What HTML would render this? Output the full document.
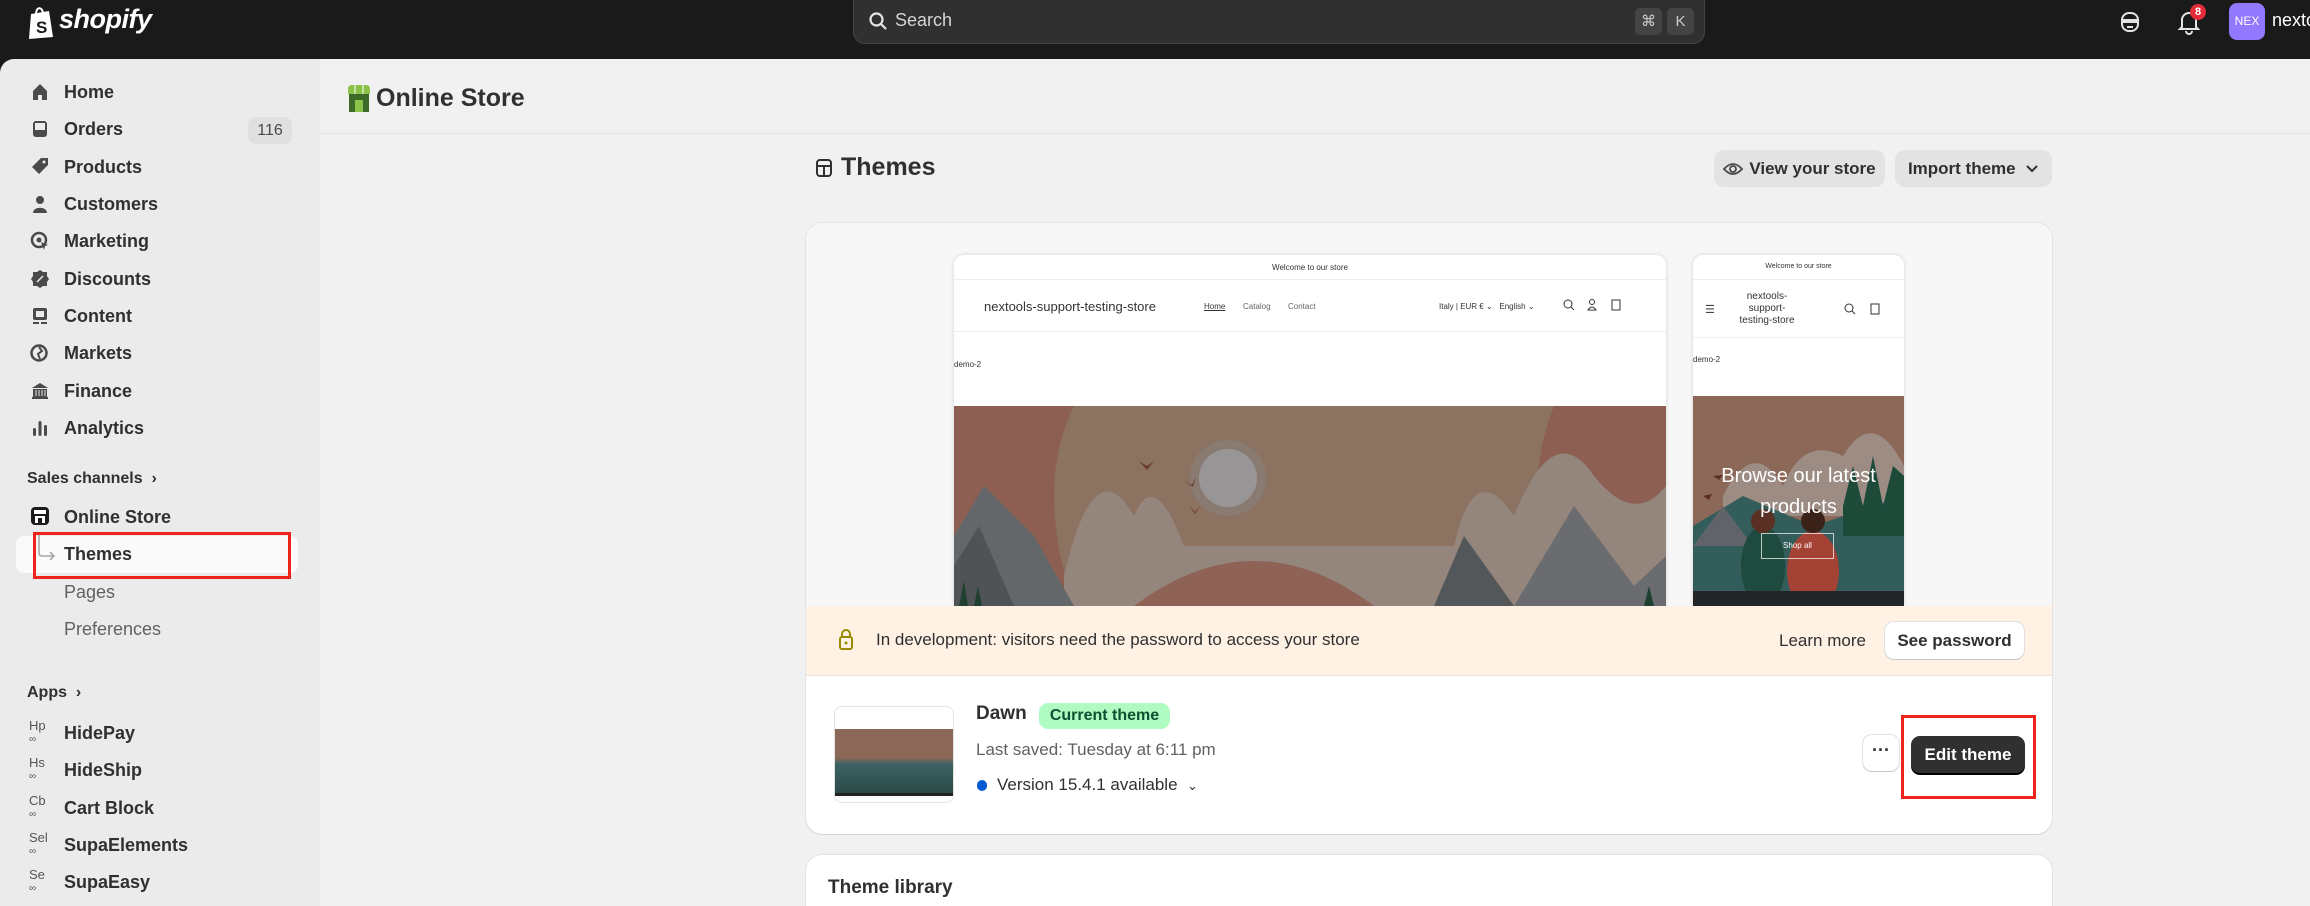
<!DOCTYPE html>
<html style="width:2310px;height:906px;overflow:hidden"><head><meta charset="utf-8"><style>
*{box-sizing:border-box;margin:0;padding:0}
body{width:2310px;height:906px;overflow:hidden;background:#1a1a1a;font-family:"Liberation Sans",sans-serif;color:#303030;position:relative}
.a{position:absolute}
.top{left:0;top:0;width:2310px;height:59px;background:#1a1a1a}
.side{left:0;top:59px;width:320px;height:847px;background:#ebebeb;border-top-left-radius:14px}
.main{left:320px;top:59px;width:1990px;height:847px;background:#f1f1f1}
.nav{position:absolute;left:64px;font-size:18px;color:#303030;font-weight:600;line-height:22px}
.ic{position:absolute;left:30px;width:20px;height:20px}
.sub{color:#616161;font-weight:400}
.btn{position:absolute;background:#e3e3e3;border-radius:10px;font-size:17px;color:#303030;font-weight:600;display:flex;align-items:center;justify-content:center}
</style></head><body>
<div class="a top"></div>
<svg class="a" style="left:27px;top:6px" width="30" height="34" viewBox="0 0 30 34"><path d="M4 8 L22 5 L26 31 L2 33 Z" fill="#fff"/><path d="M9 8 C9 1 15 0 16 7" stroke="#fff" stroke-width="2" fill="none"/><text x="9" y="27" font-size="17" font-weight="700" fill="#1a1a1a" font-family="Liberation Sans">S</text></svg>
<div class="a" style="left:59px;top:4px;font-size:27px;font-weight:700;font-style:italic;color:#fff;letter-spacing:-0.5px">shopify</div>
<div class="a" style="left:853px;top:-10px;width:852px;height:54px;background:#303030;border:1px solid #444;border-radius:12px"></div>
<svg class="a" style="left:868px;top:11px" width="20" height="20" viewBox="0 0 20 20"><circle cx="8.5" cy="8.5" r="6" stroke="#e3e3e3" stroke-width="2.2" fill="none"/><path d="M13 13l5 5" stroke="#e3e3e3" stroke-width="2.2"/></svg>
<div class="a" style="left:895px;top:10px;font-size:18px;color:#d4d4d4">Search</div>
<div class="a" style="left:1635px;top:8px;width:27px;height:27px;background:#444;border-radius:5px;color:#ccc;font-size:15px;text-align:center;line-height:27px">⌘</div>
<div class="a" style="left:1667px;top:8px;width:27px;height:27px;background:#444;border-radius:5px;color:#ccc;font-size:15px;text-align:center;line-height:27px">K</div>
<svg class="a" style="left:2119px;top:10px" width="22" height="24" viewBox="0 0 22 24"><rect x="3" y="3" width="16" height="18" rx="7" fill="none" stroke="#e3e3e3" stroke-width="2"/><rect x="4" y="9" width="14" height="4" fill="#e3e3e3"/><path d="M8 17h6" stroke="#e3e3e3" stroke-width="2"/></svg>
<svg class="a" style="left:2177px;top:9px" width="24" height="26" viewBox="0 0 24 26"><path d="M5 18 V11 a7 7 0 0 1 14 0 V18 L21 20 H3 Z" fill="none" stroke="#e3e3e3" stroke-width="2"/><path d="M9 22 a3 3 0 0 0 6 0" fill="none" stroke="#e3e3e3" stroke-width="2"/></svg>
<div class="a" style="left:2190px;top:4px;width:16px;height:16px;border-radius:8px;background:#e22c38;color:#fff;font-size:11px;text-align:center;line-height:16px;font-weight:700">8</div>
<div class="a" style="left:2229px;top:3px;width:36px;height:37px;border-radius:8px;background:#9277ff;color:#fff;font-size:12px;text-align:center;line-height:37px">NEX</div>
<div class="a" style="left:2272px;top:10px;font-size:18px;color:#fff">nexto</div>

<div class="a side"></div>
<div class="a main"></div>

<svg class="ic" style="top:82px" viewBox="0 0 20 20"><path d="M3 9 L10 2 L17 9 V18 H12 V13 H8 V18 H3Z" fill="#4a4a4a"/></svg>
<div class="nav" style="top:81px">Home</div>
<svg class="ic" style="top:119px" viewBox="0 0 20 20"><rect x="3" y="2" width="14" height="16" rx="3" fill="#4a4a4a"/><rect x="5" y="4" width="10" height="7" fill="#ebebeb"/></svg>
<div class="nav" style="top:118px">Orders</div>
<div class="a" style="left:248px;top:117px;width:44px;height:27px;border-radius:8px;background:#e0e0e0;font-size:16px;color:#4a4a4a;text-align:center;line-height:27px">116</div>
<svg class="ic" style="top:156px" viewBox="0 0 20 20"><path d="M11 2 H18 V9 L9 18 L2 11 Z" fill="#4a4a4a"/><circle cx="14" cy="6" r="1.5" fill="#ebebeb"/></svg>
<div class="nav" style="top:156px">Products</div>
<svg class="ic" style="top:194px" viewBox="0 0 20 20"><circle cx="10" cy="6" r="4" fill="#4a4a4a"/><path d="M3 19 C3 12 17 12 17 19Z" fill="#4a4a4a"/></svg>
<div class="nav" style="top:193px">Customers</div>
<svg class="ic" style="top:231px" viewBox="0 0 20 20"><circle cx="9" cy="9" r="7" stroke="#4a4a4a" stroke-width="2.5" fill="none"/><circle cx="9" cy="9" r="2.5" fill="#4a4a4a"/><path d="M11 11 L18 14 L15 15 L14 19Z" fill="#4a4a4a"/></svg>
<div class="nav" style="top:230px">Marketing</div>
<svg class="ic" style="top:269px" viewBox="0 0 20 20"><path d="M10 1 L13 3 L17 3 L17 7 L19 10 L17 13 L17 17 L13 17 L10 19 L7 17 L3 17 L3 13 L1 10 L3 7 L3 3 L7 3Z" fill="#4a4a4a"/><path d="M7 13 L13 7" stroke="#ebebeb" stroke-width="1.5"/></svg>
<div class="nav" style="top:268px">Discounts</div>
<svg class="ic" style="top:306px" viewBox="0 0 20 20"><rect x="3" y="2" width="14" height="12" rx="2" fill="#4a4a4a"/><rect x="6" y="5" width="8" height="6" fill="#ebebeb"/><path d="M3 17h6M11 17h6" stroke="#4a4a4a" stroke-width="2"/></svg>
<div class="nav" style="top:305px">Content</div>
<svg class="ic" style="top:343px" viewBox="0 0 20 20"><circle cx="9" cy="10" r="7.5" stroke="#4a4a4a" stroke-width="2.5" fill="none"/><path d="M9 4 L12 8 L8 11 L10 16" stroke="#4a4a4a" stroke-width="2" fill="none"/></svg>
<div class="nav" style="top:342px">Markets</div>
<svg class="ic" style="top:381px" viewBox="0 0 20 20"><path d="M2 7 L10 2 L18 7Z" fill="#4a4a4a"/><rect x="3" y="8" width="14" height="8" fill="#4a4a4a"/><path d="M6 9v6M9 9v6M12 9v6M15 9v6" stroke="#ebebeb"/><rect x="2" y="16" width="16" height="2" fill="#4a4a4a"/></svg>
<div class="nav" style="top:380px">Finance</div>
<svg class="ic" style="top:418px" viewBox="0 0 20 20"><rect x="3" y="10" width="3" height="8" rx="1.5" fill="#4a4a4a"/><rect x="8.5" y="3" width="3" height="15" rx="1.5" fill="#4a4a4a"/><rect x="14" y="7" width="3" height="11" rx="1.5" fill="#4a4a4a"/></svg>
<div class="nav" style="top:417px">Analytics</div>

<div class="a" style="left:27px;top:470px;font-size:16px;color:#303030;font-weight:600">Sales channels &nbsp;›</div>
<svg class="ic" style="top:506px" viewBox="0 0 20 20"><rect x="1" y="1" width="18" height="18" rx="4" fill="#1a1a1a"/><rect x="4" y="4" width="12" height="4" fill="#fff"/><rect x="5" y="10" width="10" height="7" fill="#fff"/><rect x="8" y="12" width="4" height="5" fill="#1a1a1a"/></svg>
<div class="nav" style="top:506px">Online Store</div>
<div class="a" style="left:16px;top:536px;width:282px;height:37px;border-radius:8px;background:#fafafa"></div>
<svg class="a" style="left:36px;top:533px" width="22" height="30" viewBox="0 0 22 30"><path d="M3 0 V20 Q3 23 6 23 H18 M14 19 L18 23 L14 27" stroke="#a8a8a8" stroke-width="1.6" fill="none"/></svg>
<div class="nav" style="top:543px">Themes</div>
<div class="a" style="left:33px;top:532px;width:258px;height:47px;border:3px solid #f0231b"></div>
<div class="nav sub" style="top:581px">Pages</div>
<div class="nav sub" style="top:618px">Preferences</div>
<div class="a" style="left:27px;top:684px;font-size:16px;color:#303030;font-weight:600">Apps &nbsp;›</div>
<div class="a" style="left:29px;top:720px;font-size:13px;color:#555;line-height:12px">Hp<br><span style="font-size:10px">∞</span></div><div class="nav" style="top:722px">HidePay</div>
<div class="a" style="left:29px;top:757px;font-size:13px;color:#555;line-height:12px">Hs<br><span style="font-size:10px">∞</span></div><div class="nav" style="top:759px">HideShip</div>
<div class="a" style="left:29px;top:795px;font-size:13px;color:#555;line-height:12px">Cb<br><span style="font-size:10px">∞</span></div><div class="nav" style="top:797px">Cart Block</div>
<div class="a" style="left:29px;top:832px;font-size:13px;color:#555;line-height:12px">Sel<br><span style="font-size:10px">∞</span></div><div class="nav" style="top:834px">SupaElements</div>
<div class="a" style="left:29px;top:869px;font-size:13px;color:#555;line-height:12px">Se<br><span style="font-size:10px">∞</span></div><div class="nav" style="top:871px">SupaEasy</div>

<svg class="a" style="left:347px;top:85px" width="24" height="28" viewBox="0 0 24 28"><path d="M1 4 Q1 0 5 0 H19 Q23 0 23 4 V9 H1Z" fill="#8bc34a"/><path d="M8 0 V9 M16 0 V9" stroke="#c5e1a5" stroke-width="2"/><rect x="2" y="9" width="20" height="18" fill="#3f6b2a"/><rect x="8" y="15" width="8" height="12" fill="#8bc34a"/></svg>
<div class="a" style="left:376px;top:84px;font-size:25px;font-weight:700;color:#303030">Online Store</div>
<div class="a" style="left:320px;top:133px;width:1990px;height:1px;background:#e3e3e3"></div>

<svg class="a" style="left:815px;top:158px" width="18" height="20" viewBox="0 0 18 20"><rect x="2" y="2" width="14" height="16" rx="3" fill="none" stroke="#303030" stroke-width="2"/><path d="M2 8H16M9 8V18" stroke="#303030" stroke-width="2"/></svg>
<div class="a" style="left:841px;top:153px;font-size:25px;font-weight:700;color:#303030">Themes</div>
<div class="btn" style="left:1714px;top:150px;width:171px;height:37px"><svg width="20" height="20" viewBox="0 0 20 20" style="margin-right:6px"><path d="M1 10 Q10 0 19 10 Q10 20 1 10Z" fill="none" stroke="#4a4a4a" stroke-width="1.8"/><circle cx="10" cy="10" r="3" fill="none" stroke="#4a4a4a" stroke-width="1.8"/></svg>View your store</div>
<div class="btn" style="left:1895px;top:150px;width:157px;height:37px">Import theme&nbsp;&nbsp;<svg width="14" height="10" viewBox="0 0 14 10"><path d="M2 2l5 5 5-5" stroke="#303030" stroke-width="2" fill="none"/></svg></div>

<div class="a" style="left:806px;top:223px;width:1246px;height:611px;background:#fff;border-radius:16px;box-shadow:0 1px 0 #d4d4d4,0 0 0 1px #e3e3e3;overflow:hidden">
  <div class="a" style="left:0;top:0;width:1246px;height:383px;background:#f7f7f7"></div>
  <div class="a" style="left:148px;top:32px;width:712px;height:351px;background:#fff;border-radius:10px 10px 0 0;box-shadow:0 0 4px rgba(0,0,0,.15);overflow:hidden">
    <div class="a" style="left:0;top:8px;width:712px;text-align:center;font-size:8px;color:#333">Welcome to our store</div>
    <div class="a" style="left:0;top:24px;width:712px;height:1px;background:#eee"></div>
    <div class="a" style="left:30px;top:44px;font-size:13px;color:#333">nextools-support-testing-store</div>
    <div class="a" style="left:250px;top:47px;font-size:8px;color:#333;text-decoration:underline">Home</div>
    <div class="a" style="left:289px;top:47px;font-size:8px;color:#666">Catalog</div>
    <div class="a" style="left:334px;top:47px;font-size:8px;color:#666">Contact</div>
    <div class="a" style="left:485px;top:47px;font-size:8px;color:#333">Italy | EUR € ⌄ &nbsp; English ⌄</div>
    <svg class="a" style="left:608px;top:42px" width="60" height="16" viewBox="0 0 60 16"><circle cx="6" cy="7" r="4" stroke="#333" fill="none"/><path d="M9 10l3 3" stroke="#333"/><circle cx="30" cy="5" r="2.5" stroke="#333" fill="none"/><path d="M26 13 Q30 7 34 13Z" stroke="#333" fill="none"/><rect x="50" y="3" width="8" height="10" stroke="#333" fill="none"/></svg>
    <div class="a" style="left:0;top:76px;width:712px;height:1px;background:#eee"></div>
    <div class="a" style="left:0;top:105px;font-size:8px;color:#333">demo-2</div>
    <svg class="a" style="left:0;top:151px" width="712" height="200" viewBox="0 0 712 200">
      <rect width="712" height="200" fill="#8c5f52"/>
      <path d="M120 0 Q80 80 120 200 H620 Q560 100 600 0Z" fill="#8c7261"/>
      <circle cx="274" cy="72" r="38" fill="#8a7b72"/><circle cx="274" cy="72" r="29" fill="#979595"/>
      <path d="M110 170 Q140 40 180 110 Q200 60 230 140 H500 Q520 50 560 110 Q600 10 640 70 Q680 120 712 80 V200 H110Z" fill="#94857d"/>
      <path d="M0 130 L30 80 L80 130 L120 200 H0Z" fill="#64676a"/><path d="M0 160 L25 120 L60 200 H0Z" fill="#4f5356"/>
      <path d="M560 200 L620 100 L680 180 L712 150 V200Z" fill="#6a6c6f"/><path d="M480 200 L510 130 L560 200Z" fill="#53575a"/>
      <path d="M180 200 Q300 110 420 200Z" fill="#8e6355"/>
      <path d="M185 55l8 5 7-5-7 9z M230 75l8 4 4-8-3 10z M235 100l6 6 5-6-5 8z" fill="#6e3a30"/>
      <path d="M5 200 L10 175 L14 200Z M20 200 L24 180 L28 200Z M690 200 L695 180 L700 200Z" fill="#1f4030"/>
    </svg>
  </div>
  <div class="a" style="left:887px;top:32px;width:211px;height:351px;background:#fff;border-radius:10px 10px 0 0;box-shadow:0 0 4px rgba(0,0,0,.15);overflow:hidden">
    <div class="a" style="left:0;top:8px;width:211px;text-align:center;font-size:7px;color:#333">Welcome to our store</div>
    <div class="a" style="left:0;top:24px;width:211px;height:1px;background:#eee"></div>
    <div class="a" style="left:12px;top:48px;font-size:11px;color:#444">☰</div>
    <div class="a" style="left:45px;top:36px;width:58px;text-align:center;font-size:10px;color:#333;line-height:12px">nextools-support-testing-store</div>
    <svg class="a" style="left:150px;top:46px" width="40" height="16" viewBox="0 0 40 16"><circle cx="6" cy="7" r="4" stroke="#333" fill="none"/><path d="M9 10l3 3" stroke="#333"/><rect x="28" y="3" width="8" height="10" stroke="#333" fill="none"/></svg>
    <div class="a" style="left:0;top:82px;width:211px;height:1px;background:#eee"></div>
    <div class="a" style="left:0;top:100px;font-size:8px;color:#333">demo-2</div>
    <svg class="a" style="left:0;top:141px" width="211" height="210" viewBox="0 0 211 210">
      <rect width="211" height="210" fill="#8c6858"/>
      <path d="M30 100 Q60 40 90 90 Q110 40 150 60 Q180 10 211 70 V120 H30Z" fill="#9c8c84"/>
      <path d="M0 210 V130 L50 100 L120 130 L211 100 V210Z" fill="#325d5a"/>
      <path d="M150 110 L160 70 L170 110 L180 60 L190 110 L200 70 L211 80 V140 H150Z" fill="#1e4a3a"/>
      <path d="M0 150 L30 110 L60 150Z" fill="#606468"/>
      <ellipse cx="70" cy="170" rx="22" ry="40" fill="#1f4a3e"/><circle cx="70" cy="125" r="12" fill="#5a3025"/>
      <ellipse cx="120" cy="175" rx="26" ry="40" fill="#a54236"/><circle cx="120" cy="125" r="12" fill="#3a2218"/>
      <rect x="0" y="195" width="211" height="15" fill="#232629"/>
      <path d="M20 80l6 4 4-5z M10 100l6 4 3-6z" fill="#5a2e24"/>
    </svg>
    <div class="a" style="left:0;top:206px;width:211px;text-align:center;font-size:20px;color:#fff;line-height:31px">Browse our latest products</div>
    <div class="a" style="left:68px;top:278px;width:73px;height:26px;border:1px solid rgba(255,255,255,.7);color:#fff;font-size:8px;text-align:center;line-height:24px">Shop all</div>
  </div>
  <div class="a" style="left:0;top:383px;width:1246px;height:70px;background:#fff1e3;border-bottom:1px solid #e8e3dc"></div>
  <svg class="a" style="left:32px;top:405px" width="16" height="24" viewBox="0 0 16 24"><path d="M4 9V6a4 4 0 0 1 8 0v3" stroke="#9a8a00" stroke-width="2" fill="none"/><rect x="2" y="9" width="12" height="12" rx="2" fill="none" stroke="#9a8a00" stroke-width="2"/><circle cx="8" cy="15" r="1.5" fill="#9a8a00"/></svg>
  <div class="a" style="left:70px;top:407px;font-size:17px;color:#303030">In development: visitors need the password to access your store</div>
  <div class="a" style="left:973px;top:408px;font-size:17px;color:#303030">Learn more</div>
  <div class="a" style="left:1079px;top:399px;width:139px;height:37px;background:#fff;border-radius:9px;box-shadow:0 1px 0 #c8c8c8,0 0 0 1px #e0e0e0;font-size:17px;font-weight:600;text-align:center;line-height:37px">See password</div>
  <div class="a" style="left:28px;top:483px;width:120px;height:97px;border:1px solid #e3e3e3;border-radius:8px;overflow:hidden;background:#fff">
    <div class="a" style="left:0;top:22px;width:120px;height:64px;background:linear-gradient(#8c6858 0%,#8c6858 45%,#3b6262 55%,#2a4a48 100%)"></div>
    <div class="a" style="left:0;top:86px;width:120px;height:3px;background:#222"></div>
  </div>
  <div class="a" style="left:170px;top:480px;font-size:19px;font-weight:600;color:#303030">Dawn</div>
  <div class="a" style="left:233px;top:480px;width:131px;height:26px;border-radius:9px;background:#b0fbc1;color:#0c5132;font-size:16px;font-weight:600;text-align:center;line-height:26px">Current theme</div>
  <div class="a" style="left:170px;top:517px;font-size:17px;color:#616161">Last saved: Tuesday at 6:11 pm</div>
  <div class="a" style="left:171px;top:557px;width:10px;height:11px;border-radius:6px;background:#005bd3"></div>
  <div class="a" style="left:191px;top:552px;font-size:17px;color:#303030">Version 15.4.1 available &nbsp;<span style="font-size:13px">⌄</span></div>
  <div class="a" style="left:1057px;top:512px;width:36px;height:36px;background:#fff;border-radius:9px;box-shadow:0 1px 0 #c8c8c8,0 0 0 1px #e0e0e0;text-align:center;font-size:18px;font-weight:700;line-height:30px">···</div>
  <div class="a" style="left:1105px;top:513px;width:114px;height:37px;background:#303030;border-radius:9px;box-shadow:0 2px 0 #000;color:#fff;font-size:17px;font-weight:600;text-align:center;line-height:37px">Edit theme</div>
  <div class="a" style="left:1095px;top:492px;width:135px;height:84px;border:3px solid #f0231b"></div>
</div>
<div class="a" style="left:806px;top:855px;width:1246px;height:51px;background:#fff;border-radius:16px 16px 0 0;box-shadow:0 0 0 1px #e3e3e3"></div>
<div class="a" style="left:828px;top:877px;font-size:19px;font-weight:600;color:#303030">Theme library</div>
</body></html>
